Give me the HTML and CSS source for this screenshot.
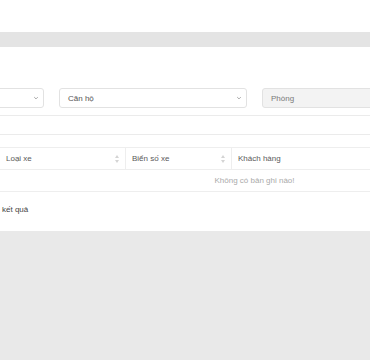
FILE: index.html
```html
<!DOCTYPE html>
<html lang="vi">

<head>
  <meta charset="UTF-8">
  <meta name="viewport" content="width=device-width, initial-scale=1.0">
  <title>Danh sách xe</title>
  <link rel="stylesheet" href="styles.css">
</head>

<body>

  <!-- Top header -->
  <div class="topbar"></div>

  <!-- Breadcrumb strip -->
  <div class="strip"></div>

  <div class="page">
    <div class="card">

      <!-- Filters -->
      <div class="filters">
        <div class="field select">
          <span class="value"></span>
          <svg class="chevron" viewBox="0 0 10 6"><path d="M2,1.5 L5,4.5 L8,1.5" /></svg>
        </div>
        <div class="field select">
          <span class="value">Căn hộ</span>
          <svg class="chevron" viewBox="0 0 10 6"><path d="M2,1.5 L5,4.5 L8,1.5" /></svg>
        </div>
        <div class="field disabled">
          <span class="value">Phòng</span>
        </div>
        <div class="field select"></div>
      </div>

      <!-- Search -->
      <div class="search"></div>

      <!-- Table -->
      <table class="grid">
        <thead>
          <tr>
            <th class="col-stt"></th>
            <th class="col-type">Loại xe <span class="sort"></span></th>
            <th class="col-plate">Biển số xe <span class="sort"></span></th>
            <th class="col-owner">Khách hàng</th>
          </tr>
        </thead>
        <tbody>
          <tr>
            <td class="empty" colspan="4">Không có bản ghi nào!</td>
          </tr>
        </tbody>
      </table>

      <!-- Footer -->
      <div class="footer">kết quả</div>

    </div>
  </div>

</body>

</html>
```

FILE: styles.css
```css
/* Base */
body {
  margin: 0;
  background-color: #e9e9e9;
  font-family: "Liberation Sans", Arial, sans-serif;
  font-size: 8px;
  color: #555;
  overflow: hidden;
  height: 100vh;
}

.topbar {
  height: 32px;
  background-color: #fff;
}

.strip {
  height: 15px;
  background-color: #e4e4e4;
}

/* Card, shifted left: the view is a crop of a wider page */
.page {
  margin-left: -160px;
  width: 829px;
}
.card {
  background-color: #fff;
  padding: 41px 16px 16px;
}

/* Filters */
.filters {
  display: grid;
  grid-template-columns: repeat(4, 188px);
  column-gap: 15px;
}
.field {
  height: 20px;
  box-sizing: border-box;
  border: 1px solid #e2e2e2;
  border-radius: 3px;
  display: flex;
  align-items: center;
  justify-content: space-between;
  padding: 0 4px 0 8px;
  color: #555;
}
.field.disabled {
  background-color: #f3f3f3;
  color: #7a7a7a;
}
.chevron {
  width: 6px;
  height: 4px;
}
.chevron path {
  fill: none;
  stroke: #999;
  stroke-width: 1.4;
}

/* Search box */
.search {
  margin-top: 7px;
  height: 20px;
  box-sizing: border-box;
  border: 1px solid #ebebeb;
  border-radius: 3px;
}

/* Table */
.grid {
  margin-top: 12px;
  width: 797px;
  border-collapse: collapse;
  table-layout: fixed;
}
.grid th {
  height: 21px;
  padding: 0 6px;
  text-align: left;
  font-weight: normal;
  color: #5a5a5a;
  border-top: 1px solid #eee;
  border-bottom: 1px solid #eee;
  border-left: 1px solid #eee;
  position: relative;
}
.grid th:first-child {
  border-left: none;
}
.col-stt { width: 131px; }
.col-type { width: 113px; }
.col-plate { width: 93px; }

/* Sort arrows */
.sort {
  position: absolute;
  right: 5px;
  top: 7px;
  width: 5px;
  height: 8px;
}
.sort::before, .sort::after {
  content: "";
  position: absolute;
  left: 0;
  border-left: 2.5px solid transparent;
  border-right: 2.5px solid transparent;
}
.sort::before {
  top: 0;
  border-bottom: 3px solid #d4d4d4;
}
.sort::after {
  bottom: 0;
  border-top: 3px solid #d4d4d4;
}

.grid td.empty {
  height: 21px;
  padding: 0;
  text-align: center;
  color: #aaa;
  border-bottom: 1px solid #eee;
}

/* Footer */
.footer {
  margin-top: 13px;
  padding-left: 146px;
  line-height: 10px;
  color: #444;
}
```
